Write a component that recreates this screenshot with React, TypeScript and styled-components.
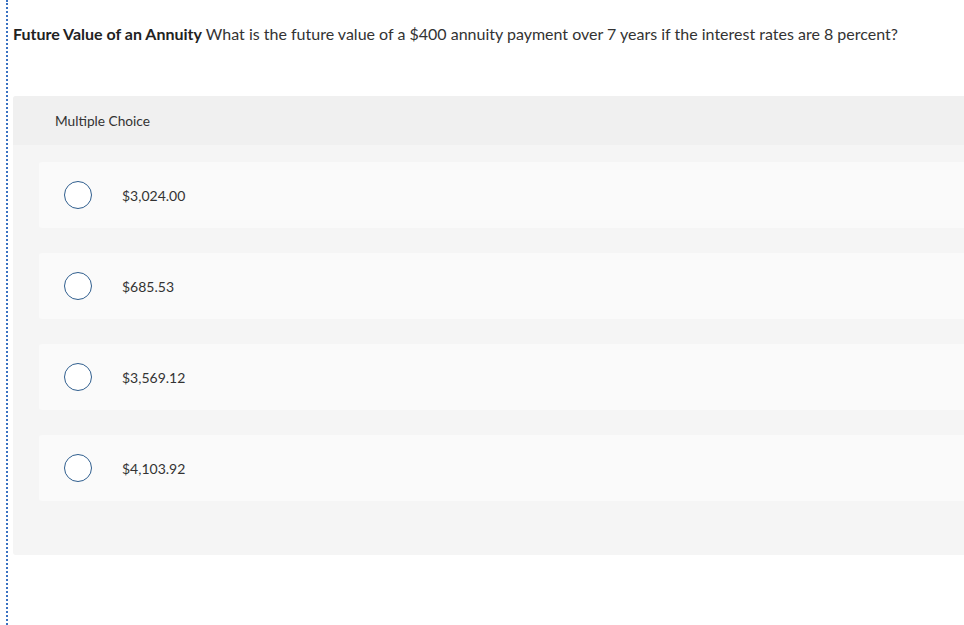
import styled, { createGlobalStyle } from "styled-components";

const GlobalStyle = createGlobalStyle`
  html, body {
    margin: 0;
    padding: 0;
    background: #ffffff;
  }
  body {
    font-family: Lato, "Open Sans", Arial, sans-serif;
    color: #333333;
  }
`;

const Page = styled.div`
  height: 625px;
  margin-left: 6px;
  padding-left: 5px;
  border-left: 2px dotted #3a72c2;
  box-sizing: border-box;
  overflow: hidden;
`;

const Question = styled.p`
  margin: 0;
  padding-top: 24px;
  font-size: 16px;
  line-height: 19px;
  color: #333333;

  strong {
    font-weight: 700;
    color: #222222;
  }
`;

const Panel = styled.div`
  margin-top: 53px;
  background: #f5f5f5;
  border-radius: 3px 0 0 3px;
  display: flex;
  flex-direction: column;
`;

const PanelHeader = styled.div`
  height: 49px;
  display: flex;
  align-items: center;
  padding-left: 42px;
  background: #f0f0f0;
  border-radius: 3px 0 0 0;
  font-size: 13.7px;
  color: #333333;
`;

const Choices = styled.div`
  display: flex;
  flex-direction: column;
  gap: 25px;
  padding: 17px 0 54px 26px;
`;

const Choice = styled.label`
  height: 66px;
  display: flex;
  align-items: center;
  gap: 30px;
  padding-left: 25px;
  background: #fafafa;
  border-radius: 3px 0 0 3px;
  font-size: 14px;
  color: #333333;
  cursor: pointer;
`;

const Radio = styled.span`
  width: 28px;
  height: 28px;
  box-sizing: border-box;
  border-radius: 50%;
  border: 1.5px solid #2f5e8e;
  background: #ffffff;
  flex-shrink: 0;
`;

const answers = ["$3,024.00", "$685.53", "$3,569.12", "$4,103.92"];

function App() {
  return (
    <>
      <GlobalStyle />
      <Page>
        <Question>
          <strong>Future Value of an Annuity</strong> What is the future value
          of a $400 annuity payment over 7 years if the interest rates are 8
          percent?
        </Question>
        <Panel>
          <PanelHeader>Multiple Choice</PanelHeader>
          <Choices>
            {answers.map((a) => (
              <Choice key={a}>
                <Radio />
                {a}
              </Choice>
            ))}
          </Choices>
        </Panel>
      </Page>
    </>
  );
}

export default App;
